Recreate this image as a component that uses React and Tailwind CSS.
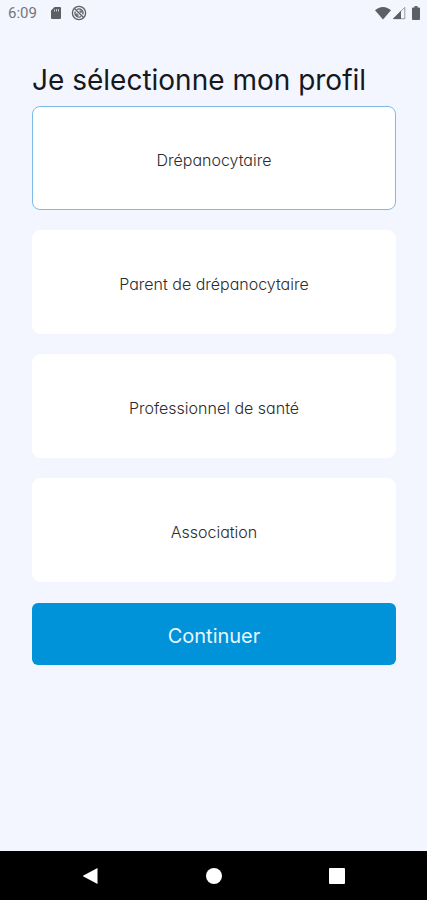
import { useState } from 'react';

const PROFILES = [
  { id: 'patient', label: 'Drépanocytaire' },
  { id: 'parent', label: 'Parent de drépanocytaire' },
  { id: 'pro', label: 'Professionnel de santé' },
  { id: 'association', label: 'Association' },
];

export default function App() {
  const [profile, setProfile] = useState('patient');

  return (
    <div className="flex min-h-screen flex-col bg-[#f3f6ff] font-['Inter',sans-serif] [font-feature-settings:'cv11']">
      <StatusBar />

      <main className="flex-1 pt-[38px] pr-[31px] pl-8">
        <form onSubmit={(e) => e.preventDefault()}>
          <fieldset>
            <legend className="mb-2.5 text-[28px] leading-8 whitespace-nowrap text-[#15181c]">
              Je sélectionne mon profil
            </legend>
            <div className="grid gap-5">
              {PROFILES.map((item) => (
                <ProfileCard
                  key={item.id}
                  item={item}
                  checked={profile === item.id}
                  onSelect={() => setProfile(item.id)}
                />
              ))}
            </div>
          </fieldset>
          <button
            type="submit"
            className="mt-[21px] h-[62px] w-full rounded-md bg-[#0093d9] pt-1 text-xl text-[#e9f6fd]"
          >
            Continuer
          </button>
        </form>
      </main>

      <NavBar />
    </div>
  );
}

function ProfileCard({ item, checked, onSelect }) {
  return (
    <label
      className={`relative flex h-26 cursor-pointer items-center justify-center rounded-lg border bg-white pt-1 text-base font-light text-[#2c2c2c] ${
        checked ? 'border-[#7dbbe6]' : 'border-white'
      }`}
    >
      <input
        type="radio"
        name="profile"
        value={item.id}
        checked={checked}
        onChange={onSelect}
        className="sr-only"
      />
      {item.label}
    </label>
  );
}

function StatusBar() {
  return (
    <header className="flex h-[26px] items-center justify-between pr-[7px] pl-2 text-[#5c5f63]">
      <div className="flex items-center">
        <span className="font-['Roboto',sans-serif] text-[15px] leading-5 text-[#74777c]">6:09</span>
        <svg className="ml-3 h-3.5 w-3.5" viewBox="0 0 12 14" fill="currentColor" aria-hidden="true">
          <path
            fillRule="evenodd"
            d="M4.500 1H10a1 1 0 0 1 1 1v10a1 1 0 0 1-1 1H2a1 1 0 0 1-1-1V4.500zM4 3.500v2h.7v-2zM6 3v2.500h.7V3zM8 3v2.500h.7V3z"
          />
        </svg>
        <svg
          className="ml-2 size-4"
          viewBox="0 0 16 16"
          fill="none"
          stroke="currentColor"
          strokeWidth="1.3"
          aria-hidden="true"
        >
          <circle cx="8" cy="8" r="6.600" />
          <path d="M3.500 3.500l9 9M6 4.500a4 4 0 0 1 5.700 5M10 11.500a4 4 0 0 1-5.700-5" />
          <path d="M8.300 6.200h1.700v1.700M5.900 8.300v1.800h1.800" />
        </svg>
      </div>
      <div className="flex items-center">
        <svg className="h-3.5 w-4" viewBox="0 0 16 14" fill="currentColor" aria-hidden="true">
          <path d="M0 4.200C2.200 2.300 4.900 1 8 1s5.800 1.300 8 3.200L8 13.500z" />
        </svg>
        <svg className="ml-px h-3.5 w-3.5" viewBox="0 0 14 14" aria-hidden="true">
          <path d="M1.500 12.700L12.800 1.400v11.300z" fill="none" stroke="currentColor" strokeOpacity="0.6" />
          <path d="M.8 13L9 4.800V13z" fill="currentColor" />
        </svg>
        <svg className="ml-1.5 h-3.5 w-2" viewBox="0 0 8 14" fill="currentColor" aria-hidden="true">
          <path d="M2.500 0h3v1.500H7a1 1 0 0 1 1 1V13a1 1 0 0 1-1 1H1a1 1 0 0 1-1-1V2.500a1 1 0 0 1 1-1h1.500z" />
        </svg>
      </div>
    </header>
  );
}

function NavBar() {
  return (
    <nav className="flex h-[49px] items-center justify-center gap-[107px] bg-black text-white">
      <button type="button" aria-label="Retour">
        <svg className="size-4" viewBox="0 0 16 16" fill="currentColor">
          <path d="M14.500 0v16L-.5 8z" />
        </svg>
      </button>
      <button type="button" aria-label="Accueil">
        <svg className="size-4" viewBox="0 0 16 16" fill="currentColor">
          <circle cx="8" cy="8" r="8" />
        </svg>
      </button>
      <button type="button" aria-label="Applications récentes">
        <svg className="size-4" viewBox="0 0 16 16" fill="currentColor">
          <rect width="16" height="16" rx="1" />
        </svg>
      </button>
    </nav>
  );
}
